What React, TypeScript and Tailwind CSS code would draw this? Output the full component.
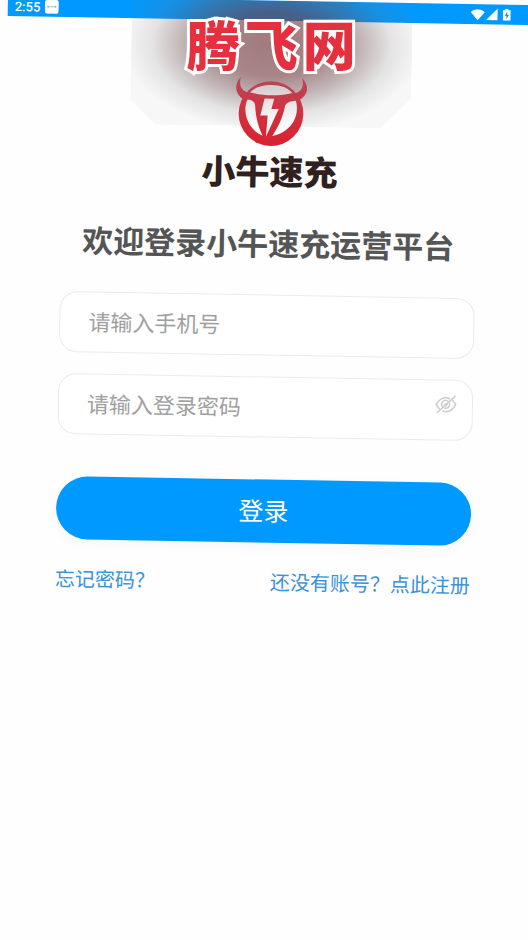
import { useState } from "react";

function StatusBar() {
  return (
    <header className="flex h-5 items-center justify-between bg-[#0099ff] pl-[7px] pr-[26px] text-white">
      <div className="flex items-center gap-1">
        <time className="pt-[2px] font-[Roboto,sans-serif] text-[13px] font-medium leading-4">2:55</time>
        <svg viewBox="0 0 14 14" className="size-[14px]" aria-hidden="true">
          <rect width="14" height="14" rx="3" fill="#fff" />
          <path d="M2.500 6h2v2h-2zM5 6.500h4v1H5zM9.500 6h2v2h-2z" fill="#9db9dc" />
        </svg>
      </div>
      <div className="flex items-center gap-px">
        <svg viewBox="0 0 14 11" className="h-[11px] w-[14px]" aria-hidden="true">
          <path d="M0 3C4-.8 10-.8 14 3L7 11z" fill="#fff" />
        </svg>
        <svg viewBox="0 0 12 12" className="size-3" aria-hidden="true">
          <path d="M12 0v12H0z" fill="#fff" />
        </svg>
        <svg viewBox="0 0 8 12" className="ml-1 h-3 w-2" aria-hidden="true">
          <path d="M2.500 0h3v1.500H8V12H0V1.500h2.500z" fill="#fff" />
          <path d="M4.500 3 2 7.200h1.700V10.500L6.200 6H4.500z" fill="#0099ff" />
        </svg>
      </div>
    </header>
  );
}

function BullLogo() {
  return (
    <svg viewBox="0 0 216 210" className="relative z-10 h-[70px] w-[72px]" aria-hidden="true">
      <defs>
        <linearGradient id="bull-red" x1="0" y1="0" x2="0" y2="210" gradientUnits="userSpaceOnUse">
          <stop offset="0" stopColor="#b5485a" />
          <stop offset="0.450" stopColor="#cf3442" />
          <stop offset="1" stopColor="#d9212f" />
        </linearGradient>
        <linearGradient id="bull-light" x1="0" y1="20" x2="0" y2="160" gradientUnits="userSpaceOnUse">
          <stop offset="0" stopColor="#d2c6c8" />
          <stop offset="0.500" stopColor="#eeeaea" />
          <stop offset="1" stopColor="#ffffff" />
        </linearGradient>
      </defs>
      <g fill="url(#bull-red)">
        <circle cx="108" cy="111" r="97" />
        <path d="M16 2C0 20-2 40 10 56c8 11 16 15 28 18h140c13-3 22-8 30-19 11-15 9-35-8-52 5 20 1 33-9 40-14 9-30 9-46 8H71c-16 1-32 1-46-8C14 35 11 20 16 2z" />
      </g>
      <g fill="url(#bull-light)">
        <path d="M44 48c18-18 38-23 64-23s46 5 63 23c-36 11-90 11-127 0z" />
        <path d="M37 70c13 1 22 6 23 17 2 32 9 61 24 91C39 160 20 106 37 70z" />
        <path d="M182 71c-15 1-27 5-32 15-5 33-19 64-37 92 52-10 84-58 69-107z" />
        <path d="M88 66h29l-8 31h22l-37 84 4-64H76z" />
      </g>
    </svg>
  );
}

function HiddenEye() {
  return (
    <svg
      viewBox="0 0 22 20"
      className="h-5 w-[22px]"
      fill="none"
      stroke="#cccccc"
      strokeWidth="1.500"
      strokeLinecap="round"
      aria-hidden="true"
    >
      <path d="M14.500 4C9 1.500 4 4.500 1.200 9.800c1 2 2.200 3.500 3.600 4.600M8 16.300c5.500 1.900 10-1.200 12.800-6.500-.9-1.700-1.900-3-3.100-4.100" />
      <path d="M13.200 6.800a3.800 3.800 0 0 0-5.700 5M9.500 13.300a3.800 3.800 0 0 0 5.100-4.400" />
      <circle cx="11" cy="10" r="1" />
      <path d="M20 1.500 2.500 18" />
    </svg>
  );
}

const fieldClass =
  "flex h-[61px] items-center rounded-[18px] border border-[#ebebeb] bg-white pb-1 pl-7 pr-[15px]";
const inputClass =
  "min-w-0 flex-1 bg-transparent text-[22px] font-normal leading-8 text-[#444] outline-none placeholder:text-[#a0a0a0]";

export default function App() {
  const [visible, setVisible] = useState(false);
  return (
    <div className="min-h-screen overflow-hidden bg-[#fefefe] font-['Noto_Sans_CJK_SC',sans-serif]">
      <div className="relative -mr-[9px] -mt-1 ml-2 origin-top-left rotate-1">
        <StatusBar />
        <main className="px-[57px] pt-14">
          <div className="flex flex-col items-center">
            <BullLogo />
            <p className="mt-1 text-[34px] font-black leading-10 text-[#30211e]">小牛速充</p>
          </div>
          <h1 className="mt-8 whitespace-nowrap text-center text-[31px] font-bold leading-10 text-[#555555]">
            欢迎登录小牛速充运营平台
          </h1>
          <form className="mt-8" onSubmit={(e) => e.preventDefault()}>
            <div className="flex flex-col gap-[21px]">
              <div className={fieldClass}>
                <input type="tel" aria-label="请输入手机号" placeholder="请输入手机号" className={inputClass} />
              </div>
              <div className={fieldClass}>
                <input
                  type={visible ? "text" : "password"}
                  aria-label="请输入登录密码"
                  placeholder="请输入登录密码"
                  className={inputClass}
                />
                <button
                  type="button"
                  aria-label="显示密码"
                  className="pb-2"
                  onClick={() => setVisible(!visible)}
                >
                  <HiddenEye />
                </button>
              </div>
            </div>
            <button
              type="submit"
              className="mt-[42px] h-[63px] w-full rounded-full bg-[#0099ff] pb-1 text-[25px] leading-8 text-white shadow-[0_4px_12px_rgba(0,0,0,0.04)]"
            >
              登录
            </button>
          </form>
          <nav className="mt-[25px] flex justify-between whitespace-nowrap text-[20px] font-normal leading-7 text-[#3a92d8]">
            <a href="#forgot">忘记密码？</a>
            <a href="#register">还没有账号？点此注册</a>
          </nav>
        </main>
        <div className="pointer-events-none absolute inset-x-0 top-0 flex justify-center">
          <div className="flex h-[126px] w-[281px] justify-center bg-[radial-gradient(ellipse_150px_88px_at_50%_44px,rgba(115,57,60,0.67)_0%,rgba(115,60,63,0.62)_36%,rgba(110,80,82,0.44)_58%,rgba(115,108,108,0.18)_80%,rgba(125,125,125,0.05)_100%)] [clip-path:polygon(0_0,100%_0,100%_76%,89%_100%,9%_100%,0_80%)]">
            <strong className="mt-[10px] flex -rotate-1 gap-[5px] whitespace-nowrap text-[53px] font-black leading-[64px] text-[#e5303f] [-webkit-text-stroke:6px_white] [paint-order:stroke_fill]">
              <span>腾</span>
              <span>飞</span>
              <span>网</span>
            </strong>
          </div>
        </div>
      </div>
    </div>
  );
}
